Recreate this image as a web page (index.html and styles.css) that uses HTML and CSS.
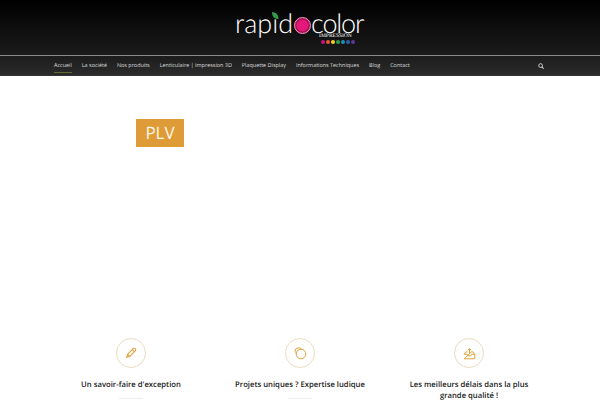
FILE: index.html
```html
<!DOCTYPE html>
<html lang="fr">
<head>
<meta charset="utf-8">
<title>Rapidocolor Impression</title>
<link rel="stylesheet" href="styles.css">
</head>
<body>
<header class="masthead">
  <a class="logo" href="#">
    <span class="logo-word">rapid</span>
    <svg class="logo-leaf" width="7" height="7" viewBox="0 0 7 7"><path d="M0 0C4 .5 6.500 2.500 6.500 7C2.500 7 0 4.500 0 0Z" fill="#2f9e4f"/></svg>
    <span class="logo-o"></span>
    <span class="logo-stack">
      <span class="logo-word logo-word-tight">color</span>
      <span class="logo-sub">IMPRESSION</span>
      <span class="logo-dots">
        <i class="dot dot-1"></i><i class="dot dot-2"></i><i class="dot dot-3"></i><i class="dot dot-4"></i><i class="dot dot-5"></i><i class="dot dot-6"></i><i class="dot dot-7"></i>
      </span>
    </span>
  </a>
</header>
<nav class="nav">
  <ul class="nav-list">
    <li><a class="nav-link is-active" href="#">Accueil</a></li>
    <li><a class="nav-link" href="#">La société</a></li>
    <li><a class="nav-link" href="#">Nos produits</a></li>
    <li><a class="nav-link" href="#">Lenticulaire | Impression 3D</a></li>
    <li><a class="nav-link" href="#">Plaquette Display</a></li>
    <li><a class="nav-link" href="#">Informations Techniques</a></li>
    <li><a class="nav-link" href="#">Blog</a></li>
    <li><a class="nav-link" href="#">Contact</a></li>
  </ul>
  <svg class="nav-search" width="6" height="6" viewBox="0 0 7 7"><circle cx="3" cy="3" r="2.200" fill="none" stroke="#ddd" stroke-width="1"/><path d="M4.500 4.500L6.500 6.500" stroke="#ddd" stroke-width="1.200"/></svg>
</nav>
<main class="main">
  <section class="hero">
    <div class="plv">PLV</div>
  </section>
  <section class="features">
    <article class="feature">
      <span class="feature-icon">
        <svg width="12" height="12" viewBox="0 0 14 14" fill="none" stroke="#dfa13c" stroke-width="1.200"><path d="M2 12L3 8.500L9.500 2C10.300 1.300 11.300 1.300 12 2C12.700 2.700 12.700 3.700 12 4.500L5.500 11Z"/><path d="M3 8.500L5.500 11M8.500 3L11 5.500"/></svg>
      </span>
      <h3 class="feature-title">Un savoir-faire d'exception</h3>
      <span class="feature-rule"></span>
    </article>
    <article class="feature">
      <span class="feature-icon">
        <svg width="14" height="14" viewBox="0 0 14 14" fill="none" stroke="#dfa13c" stroke-width="1"><circle cx="8" cy="8" r="4.800"/><path d="M3.400 7A2.700 2.700 0 0 1 5 2C6.500 1.500 8 2.300 8.600 3.300"/></svg>
      </span>
      <h3 class="feature-title">Projets uniques ? Expertise ludique</h3>
      <span class="feature-rule"></span>
    </article>
    <article class="feature">
      <span class="feature-icon">
        <svg width="13" height="13" viewBox="0 0 16 16" fill="none" stroke="#dfa13c" stroke-width="1.200"><path d="M1.500 9L3.500 6H5.500M10.500 6H12.500L14.500 9V14.500H1.500Z"/><path d="M1.500 9H5.500L6.500 11H9.500L10.500 9H14.500"/><path d="M8 2V8M5.800 4L8 1.800L10.200 4"/></svg>
      </span>
      <h3 class="feature-title">Les meilleurs délais dans la plus grande qualité !</h3>
    </article>
  </section>
</main>
</body>
</html>
```
FILE: styles.css
```css
* { box-sizing: border-box; }
html, body { margin: 0; height: 100%; overflow: hidden; }
body {
  background: #fff;
  font-family: "Open Sans", sans-serif;
  text-rendering: geometricPrecision;
}

.masthead {
  height: 55px;
  background: linear-gradient(#000, #1b1b1b);
  display: flex;
  justify-content: center;
  padding-top: 12px;
}
.logo {
  display: flex;
  align-items: flex-start;
  position: relative;
  color: #fff;
  text-decoration: none;
  width: 130px;
}
.logo-word {
  display: block;
  font-family: "Lato", sans-serif;
  font-weight: 300;
  font-size: 27px;
  line-height: 22px;
  letter-spacing: 0;
}
.logo-word-tight { letter-spacing: -1.200px; }
.logo-o {
  width: 17px;
  height: 17px;
  margin: 5px 0 0 1px;
  border-radius: 50%;
  background: radial-gradient(circle, #e6177a 0 5px, #a81256 6.500px);
  border: 1.500px solid #fb9cc6;
  flex: none;
}
.logo-leaf { position: absolute; left: 37px; top: 0; }
.logo-stack { display: flex; flex-direction: column; align-items: flex-start; }
.logo-sub {
  font-family: "Liberation Serif", serif;
  font-size: 5.500px;
  line-height: 5px;
  margin: 0 0 0 8px;
  white-space: nowrap;
}
.logo-dots { display: flex; gap: 1px; margin: 1px 0 0 10px; }
.dot { width: 4px; height: 4px; border-radius: 50%; }
.dot-1 { background: #c8157f; }
.dot-2 { background: #e8582a; }
.dot-3 { background: #f2d21b; }
.dot-4 { background: #2e9e4f; }
.dot-5 { background: #1f8fb8; }
.dot-6 { background: #2b5fa8; }
.dot-7 { background: #5a3a94; }

.nav {
  height: 21px;
  background: linear-gradient(#1c1c1c, #2b2b2b);
  border-top: 1px solid #8a8a8a;
  border-bottom: 1px solid #333;
  display: flex;
  align-items: center;
  justify-content: space-between;
  padding: 0 56px 0 54px;
}
.nav-list {
  display: flex;
  gap: 10px;
  list-style: none;
  margin: 0;
  padding: 0;
}
.nav-link {
  display: block;
  color: #dcdcdc;
  font-size: 5.450px;
  font-weight: 500;
  line-height: 15px;
  text-decoration: none;
}
.nav-link.is-active { box-shadow: inset 0 -1px 0 #5d6a32; }
.nav-search { display: block; }

.hero {
  height: 262px;
  padding: 43px 0 0 136px;
}
.plv {
  width: 48px;
  height: 28px;
  background: #df9b35;
  color: #fdf6ea;
  font-size: 17px;
  font-weight: 500;
  line-height: 28px;
  text-align: center;
}

.features {
  display: grid;
  grid-template-columns: repeat(3, 169px);
  justify-content: center;
}
.feature {
  display: flex;
  flex-direction: column;
  align-items: center;
  text-align: center;
}
.feature-icon {
  width: 30px;
  height: 30px;
  border: 1px solid #e9dcc0;
  border-radius: 50%;
  display: flex;
  align-items: center;
  justify-content: center;
}
.feature-title {
  margin: 12px 0 0;
  color: #1a1a1a;
  font-size: 7.700px;
  font-weight: 600;
  line-height: 11px;
  max-width: 140px;
}
.feature-rule {
  display: block;
  width: 24px;
  height: 1px;
  background: #eee;
  margin-top: 7px;
}
```
